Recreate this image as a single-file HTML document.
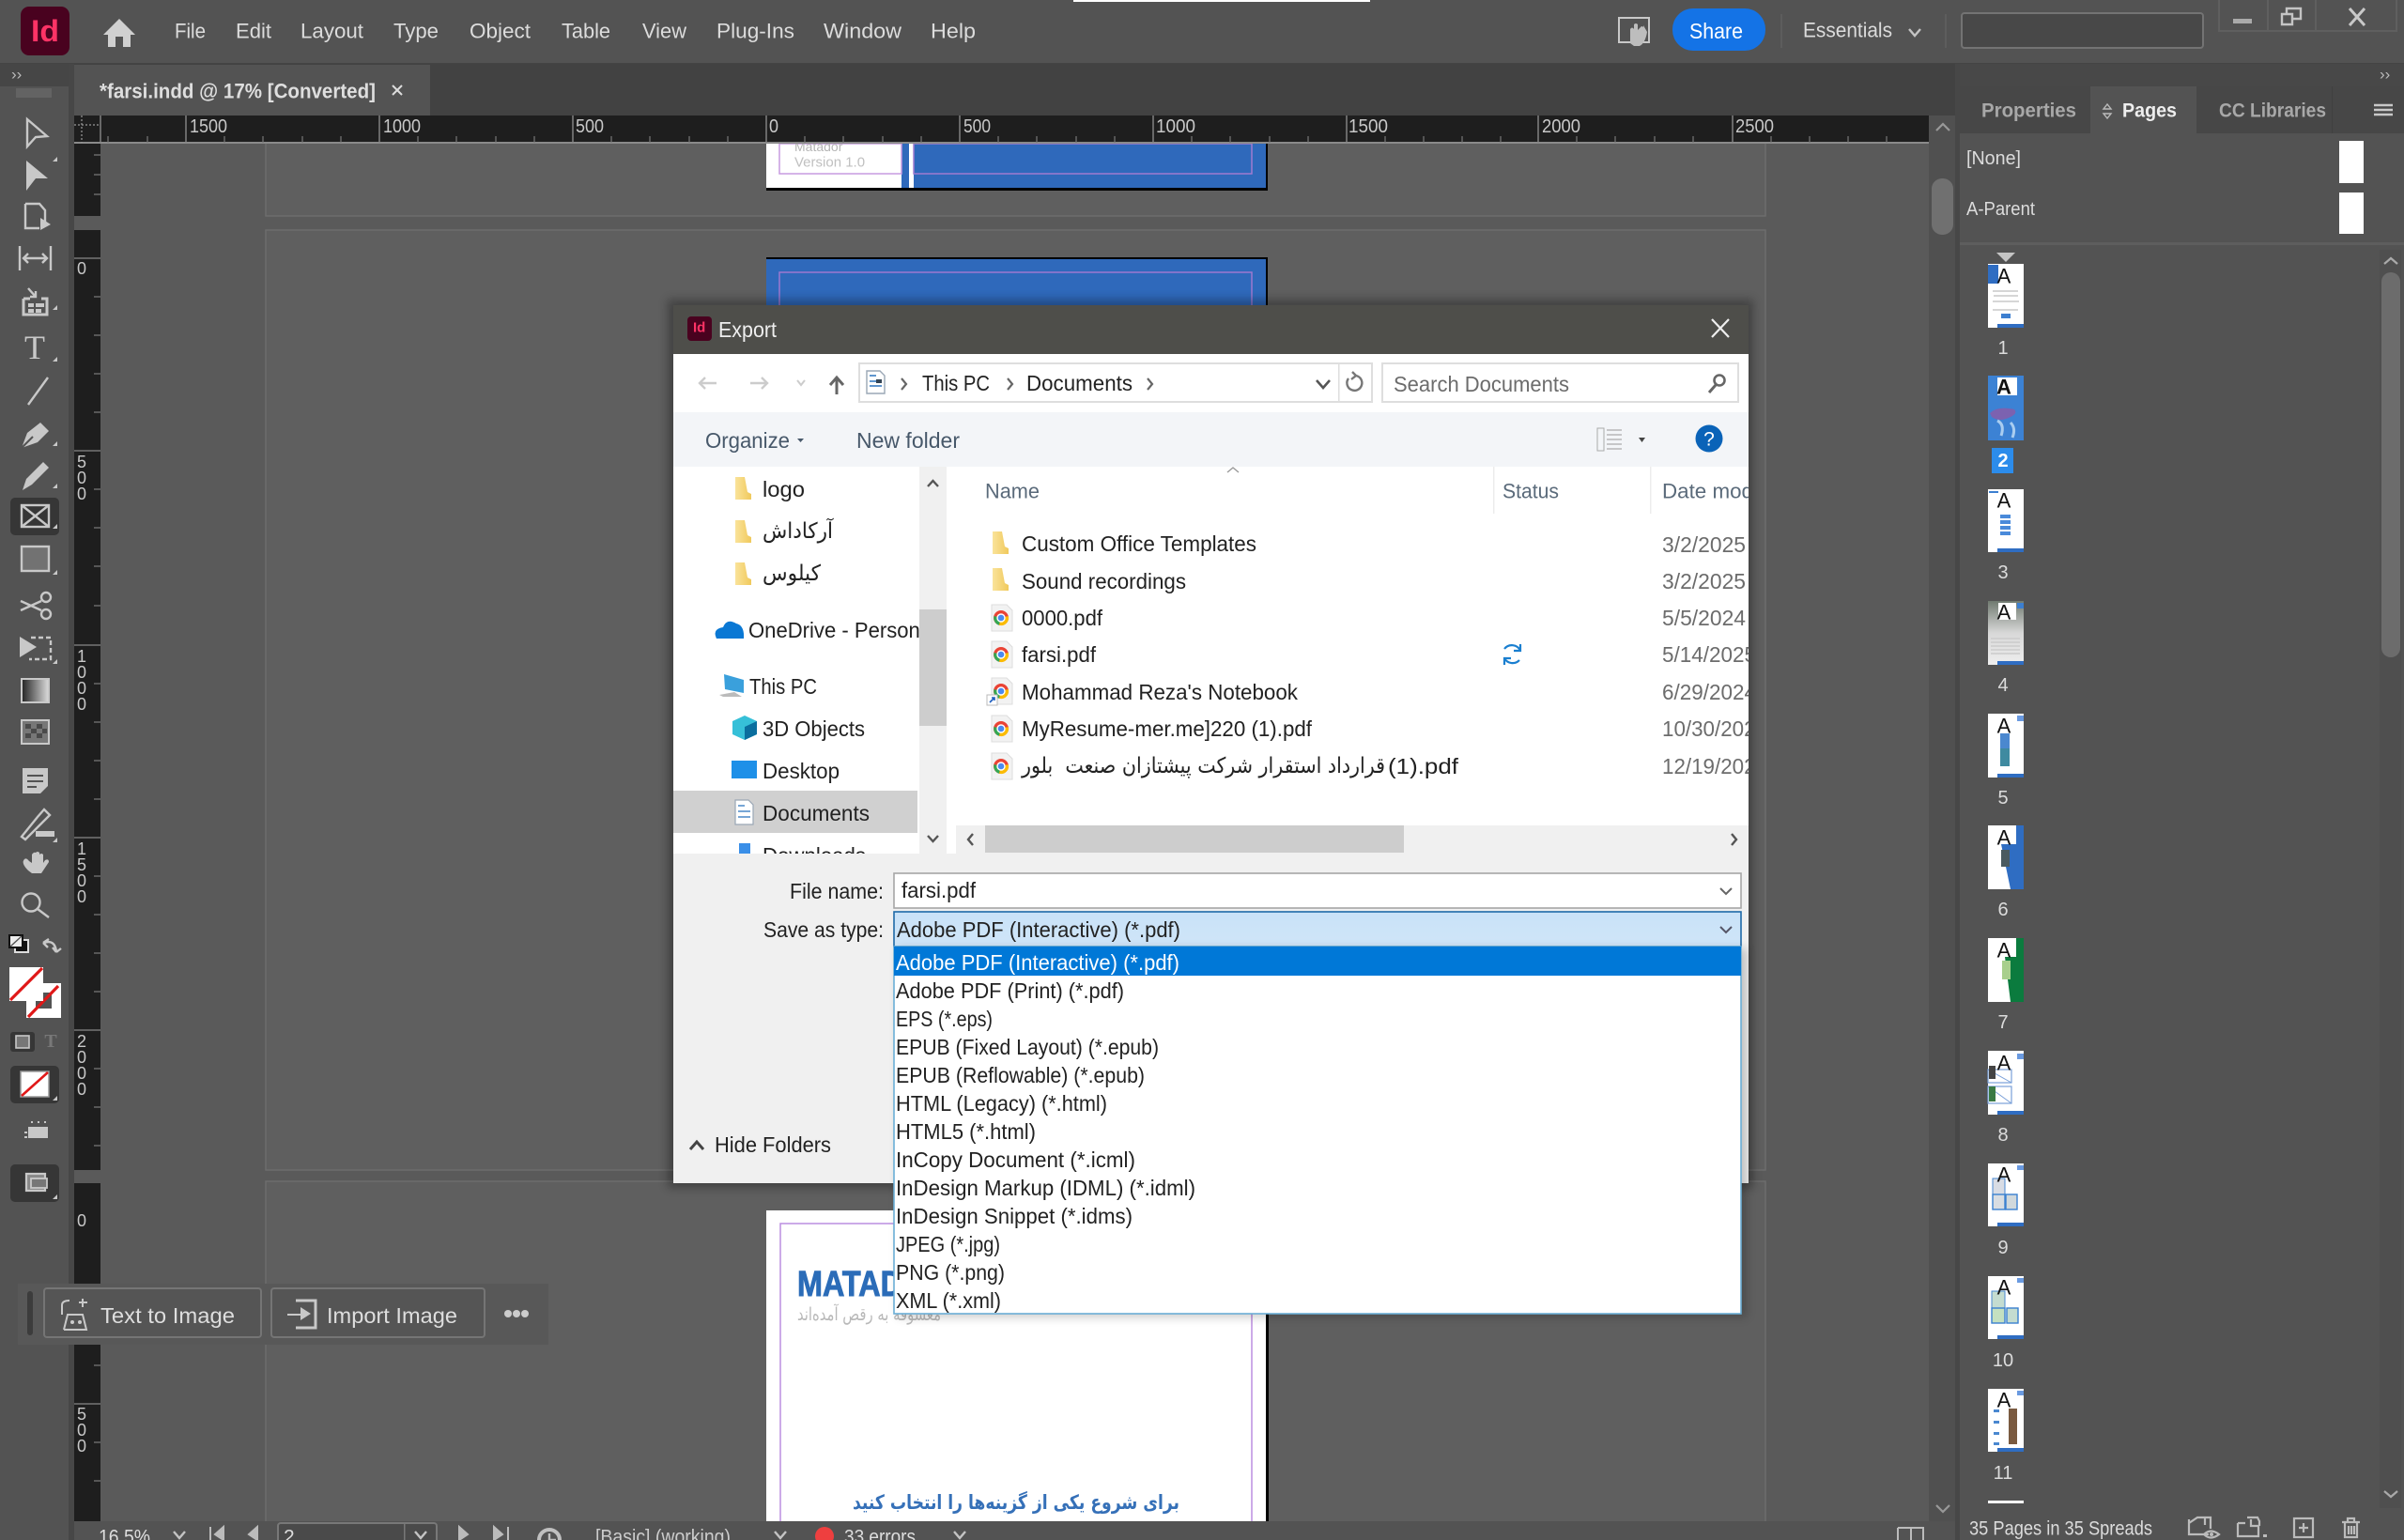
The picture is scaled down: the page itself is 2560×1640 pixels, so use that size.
<!DOCTYPE html>
<html><head><meta charset="utf-8"><title>InDesign Export</title>
<style>
html,body{margin:0;padding:0;background:#535353;width:2560px;height:1640px;overflow:hidden}
svg{display:block}
text{font-family:"Liberation Sans","DejaVu Sans",sans-serif;dominant-baseline:central}
.m{font-size:22px;fill:#dcdcdc}
.d{font-size:23px;fill:#222}
.g{font-size:23px;fill:#6c6c6c}
.h{font-size:22px;fill:#5a6a7a}
.r{font-size:20px;fill:#c8c8c8}
.v{font-size:18px;fill:#c8c8c8;text-anchor:middle}
.n{font-size:20px;fill:#dcdcdc;text-anchor:middle}
.a{font-size:22px;fill:#111;text-anchor:middle}
.ar{font-family:"DejaVu Sans",sans-serif}
.i{fill:none;stroke:#c8c8c8;stroke-width:2.4}
.f{fill:#c8c8c8}
.c{fill:none;stroke:#c4c4c4;stroke-width:2.4}
.k{fill:none;stroke:#555;stroke-width:2.2}
.w{fill:none;stroke:#bbb;stroke-width:2.2}
</style></head><body>
<svg width="2560" height="1640" viewBox="0 0 2560 1640" xmlns="http://www.w3.org/2000/svg">
<defs>
<filter id="sh" x="-10%" y="-10%" width="120%" height="120%"><feGaussianBlur stdDeviation="5"/></filter>
<clipPath id="dlg"><rect x="717" y="320" width="1145" height="940"/></clipPath>
<clipPath id="nav"><rect x="717" y="497" width="262" height="412"/></clipPath>
<linearGradient id="fy" x1="0" x2="1"><stop offset="0" stop-color="#fae39a"/><stop offset="1" stop-color="#f0c95c"/></linearGradient>
<linearGradient id="gr" x1="0" x2="1"><stop offset="0" stop-color="#222"/><stop offset="1" stop-color="#ddd"/></linearGradient>
<linearGradient id="p4" x1="0" x2="0" y1="0" y2="1"><stop offset="0" stop-color="#707a70"/><stop offset=".5" stop-color="#d8d8d8"/><stop offset="1" stop-color="#eee"/></linearGradient>
<linearGradient id="cb" x1="0" x2="0" y1="0" y2="1"><stop offset="0" stop-color="#c9e2f8"/><stop offset="1" stop-color="#cfe5f8"/></linearGradient>
<symbol id="fld" viewBox="0 0 18 24" width="18" height="24"><path d="M1,0H11L14,16L18,18V24H1Z" fill="url(#fy)"/></symbol>
<symbol id="chr" viewBox="0 0 24 30" width="24" height="30"><path d="M1,1H17L23,7V29H1Z" fill="#f2f2f2" stroke="#ddd"/><circle cx="11" cy="15" r="8" fill="#ea4335"/><path d="M11,15L3.5,13A8,8 0 0 0 9,22.8Z" fill="#34a853"/><path d="M11,15L9,22.8A8,8 0 0 0 18.8,13Z" fill="#fbbc05"/><circle cx="11" cy="15" r="4" fill="#4a8af0" stroke="#fff" stroke-width="1.4"/></symbol>
</defs>

<!-- base -->
<rect width="2560" height="1640" fill="#535353"/>
<rect x="1143" y="0" width="316" height="2" fill="#fff"/>

<!-- title bar -->
<rect x="22" y="7" width="52" height="52" rx="9" fill="#49021f"/>
<text x="33" y="33" font-size="32" font-weight="bold" fill="#ff3366" textLength="30" lengthAdjust="spacingAndGlyphs">Id</text>
<path d="M127,20L110,37H115V50H123V39H131V50H139V37H144Z" fill="#d0d0d0"/>
<text class="m" x="186" y="33" textLength="33" lengthAdjust="spacingAndGlyphs">File</text>
<text class="m" x="251" y="33" textLength="38" lengthAdjust="spacingAndGlyphs">Edit</text>
<text class="m" x="320" y="33" textLength="67" lengthAdjust="spacingAndGlyphs">Layout</text>
<text class="m" x="419" y="33" textLength="48" lengthAdjust="spacingAndGlyphs">Type</text>
<text class="m" x="500" y="33" textLength="65" lengthAdjust="spacingAndGlyphs">Object</text>
<text class="m" x="598" y="33" textLength="52" lengthAdjust="spacingAndGlyphs">Table</text>
<text class="m" x="684" y="33" textLength="47" lengthAdjust="spacingAndGlyphs">View</text>
<text class="m" x="763" y="33" textLength="83" lengthAdjust="spacingAndGlyphs">Plug-Ins</text>
<text class="m" x="877" y="33" textLength="83" lengthAdjust="spacingAndGlyphs">Window</text>
<text class="m" x="991" y="33" textLength="48" lengthAdjust="spacingAndGlyphs">Help</text>

<rect x="1724" y="19" width="32" height="26" fill="none" stroke="#c8c8c8" stroke-width="2"/>
<path d="M1736,46V31Q1738,28 1740,31V26Q1742,24 1744,26V32L1748,28Q1751,28 1750,32V27L1754,34Q1752,46 1746,49H1740Z" fill="#bdbdbd"/>
<rect x="1781" y="9" width="99" height="45" rx="22" fill="#1473e6"/>
<text x="1799" y="33" font-size="23" fill="#fff" textLength="57" lengthAdjust="spacingAndGlyphs">Share</text>
<rect x="1896" y="15" width="2" height="36" fill="#5d5d5d"/>
<text class="m" x="1920" y="32" textLength="95" lengthAdjust="spacingAndGlyphs">Essentials</text>
<path d="M2033,31L2039,38L2045,31" class="c"/>
<rect x="2071" y="15" width="2" height="36" fill="#5d5d5d"/>
<rect x="2089" y="14" width="257" height="37" rx="3" fill="#484848" stroke="#737373" stroke-width="2"/>
<path d="M2363,0V33H2552V0" fill="none" stroke="#5f5f5f" stroke-width="2"/>
<path d="M2415,0V33M2466,0V33" stroke="#5f5f5f" stroke-width="2"/>
<rect x="2378" y="20" width="20" height="5" fill="#aaa"/>
<path d="M2430,15H2441V26H2430ZM2435,15V9H2450V20H2441" class="c" stroke-width="3"/>
<path d="M2502,9L2518,27M2518,9L2502,27" fill="none" stroke="#c8c8c8" stroke-width="3"/>

<!-- app chrome panels -->
<rect x="0" y="67" width="2560" height="1" fill="#444"/>
<rect x="79" y="68" width="2003" height="55" fill="#424242"/>
<rect x="79" y="69" width="379" height="54" fill="#535353"/>
<text x="106" y="97" font-size="22" font-weight="bold" fill="#dedede" textLength="294" lengthAdjust="spacingAndGlyphs">*farsi.indd @ 17% [Converted]</text>
<path d="M418,91L428,101M428,91L418,101" fill="none" stroke="#ddd" stroke-width="2"/>

<!-- pasteboard -->
<rect x="79" y="152" width="2003" height="1470" fill="#5a5a5a"/>
<rect x="283" y="152" width="1597" height="78" fill="#5f5f5f" stroke="#6d6d6d" stroke-width="1.5"/>
<rect x="283" y="245" width="1597" height="1001" fill="#5f5f5f" stroke="#6d6d6d" stroke-width="1.5"/>
<rect x="283" y="1258" width="1597" height="380" fill="#5f5f5f" stroke="#6d6d6d" stroke-width="1.5"/>

<!-- page 1 remainder -->
<rect x="816" y="153" width="534" height="50" fill="#000"/>
<rect x="816" y="153" width="532" height="47" fill="#fff"/>
<rect x="960" y="153" width="388" height="47" fill="#2f69bb"/>
<rect x="968" y="153" width="5" height="47" fill="#fff"/>
<rect x="830" y="153" width="130" height="32" fill="none" stroke="#c79be0" stroke-width="1.5"/>
<rect x="973" y="153" width="360" height="32" fill="none" stroke="#a07bd0" stroke-width="1.5"/>
<text x="846" y="156" font-size="14" fill="#b5b5b5">Matador</text>
<text x="846" y="173" font-size="15" fill="#c0c0c0">Version 1.0</text>

<!-- page 2 -->
<rect x="816" y="274" width="534" height="60" fill="#000"/>
<rect x="816" y="276" width="532" height="60" fill="#2f69bb"/>
<rect x="830" y="290" width="503" height="50" fill="none" stroke="#9d78cf" stroke-width="1.5"/>

<!-- page 3 -->
<rect x="1348" y="1289" width="3" height="331" fill="#000"/>
<rect x="816" y="1289" width="532" height="331" fill="#fff"/>
<path d="M831,1620V1303H1333V1620" fill="none" stroke="#bb8ee0" stroke-width="1.5"/>
<text x="849" y="1368" font-size="38" font-weight="bold" fill="#2b6cb8" stroke="#2b6cb8" stroke-width="1" textLength="112" lengthAdjust="spacingAndGlyphs">MATAD</text>
<text class="ar" x="849" y="1400" font-size="19" fill="#b9b9b9" textLength="153" lengthAdjust="spacingAndGlyphs">معشوقه به رقص آمده‌اند</text>
<text class="ar" x="908" y="1600" font-size="21" font-weight="bold" fill="#3570b8" textLength="348" lengthAdjust="spacingAndGlyphs">برای شروع یکی از گزینه‌ها را انتخاب کنید</text>

<!-- horizontal ruler -->
<rect x="79" y="123" width="1975" height="29" fill="#1e1e1e"/>
<rect x="79" y="151" width="1975" height="2" fill="#8a8a8a"/>
<path d="M107,123V152M198,123V152M404,123V152M610,123V152M816,123V152M1022,123V152M1228,123V152M1434,123V152M1638,123V152M1845,123V152" stroke="#888" stroke-width="1.4"/>
<path d="M115,145V152M157,145V152M239,145V152M280,145V152M322,145V152M363,145V152M445,145V152M486,145V152M528,145V152M569,145V152M651,145V152M692,145V152M734,145V152M775,145V152M857,145V152M898,145V152M940,145V152M981,145V152M1063,145V152M1104,145V152M1146,145V152M1187,145V152M1269,145V152M1310,145V152M1352,145V152M1393,145V152M1475,145V152M1516,145V152M1557,145V152M1598,145V152M1679,145V152M1720,145V152M1762,145V152M1803,145V152M1886,145V152M1927,145V152M1968,145V152M2009,145V152" stroke="#777" stroke-width="1.2"/>
<path d="M79,133H107M87,123V152" stroke="#999" stroke-width="1.2" stroke-dasharray="2 2"/>
<text class="r" x="202" y="135" textLength="40" lengthAdjust="spacingAndGlyphs">1500</text>
<text class="r" x="408" y="135" textLength="40" lengthAdjust="spacingAndGlyphs">1000</text>
<text class="r" x="613" y="135" textLength="30" lengthAdjust="spacingAndGlyphs">500</text>
<text class="r" x="819" y="135" textLength="10" lengthAdjust="spacingAndGlyphs">0</text>
<text class="r" x="1026" y="135" textLength="29" lengthAdjust="spacingAndGlyphs">500</text>
<text class="r" x="1231" y="135" textLength="42" lengthAdjust="spacingAndGlyphs">1000</text>
<text class="r" x="1436" y="135" textLength="42" lengthAdjust="spacingAndGlyphs">1500</text>
<text class="r" x="1642" y="135" textLength="41" lengthAdjust="spacingAndGlyphs">2000</text>
<text class="r" x="1848" y="135" textLength="41" lengthAdjust="spacingAndGlyphs">2500</text>

<!-- vertical ruler -->
<rect x="79" y="153" width="28" height="77" fill="#1e1e1e"/>
<rect x="79" y="245" width="28" height="1001" fill="#1e1e1e"/>
<rect x="79" y="1260" width="28" height="360" fill="#1e1e1e"/>
<path d="M79,275H107M79,480H107M79,687H107M79,892H107M79,1097H107M79,1495H107" stroke="#888" stroke-width="1.3"/>
<path d="M100,165H107M100,186H107M100,207H107M100,316H107M100,357H107M100,398H107M100,439H107M100,521H107M100,562H107M100,603H107M100,645H107M100,728H107M100,769H107M100,810H107M100,851H107M100,933H107M100,974H107M100,1015H107M100,1056H107M100,1138H107M100,1179H107M100,1220H107M100,1454H107M100,1536H107M100,1577H107" stroke="#777" stroke-width="1.2"/>
<text class="v" x="87" y="286">0</text>
<text class="v" x="87" y="492">5</text><text class="v" x="87" y="509">0</text><text class="v" x="87" y="526">0</text>
<text class="v" x="87" y="699">1</text><text class="v" x="87" y="716">0</text><text class="v" x="87" y="733">0</text><text class="v" x="87" y="750">0</text>
<text class="v" x="87" y="904">1</text><text class="v" x="87" y="921">5</text><text class="v" x="87" y="938">0</text><text class="v" x="87" y="955">0</text>
<text class="v" x="87" y="1109">2</text><text class="v" x="87" y="1126">0</text><text class="v" x="87" y="1143">0</text><text class="v" x="87" y="1160">0</text>
<text class="v" x="87" y="1300">0</text>
<text class="v" x="87" y="1506">5</text><text class="v" x="87" y="1523">0</text><text class="v" x="87" y="1540">0</text>

<!-- left toolbar -->
<rect x="0" y="68" width="79" height="1572" fill="#535353"/>
<rect x="73" y="68" width="6" height="1572" fill="#474747"/>
<rect x="0" y="68" width="73" height="24" fill="#464646"/>
<text x="12" y="79" font-size="17" fill="#bbb">››</text>
<path d="M18,94V104M20,94V104M22,94V104M24,94V104M26,94V104M28,94V104M30,94V104M32,94V104M34,94V104M36,94V104M38,94V104M40,94V104M42,94V104M44,94V104M46,94V104M48,94V104M50,94V104M52,94V104M54,94V104" stroke="#777" stroke-width=".9"/>
<path d="M29,127L50,145L38,146L29,156Z" class="i"/>
<path d="M28,171L51,190L38,190L28,203Z" class="f"/>
<path d="M27,217H42L48,224V237M27,217V243H42" class="i"/><path d="M43,232L54,239L43,245Z" class="f"/>
<path d="M21,262V288M54,262V288" class="i" stroke-width="3"/><path d="M25,275H50M30,270L25,275L30,280M45,270L50,275L45,280" class="i"/>
<path d="M25,318V335H50V318H44M25,318H32" fill="none" stroke="#c8c8c8" stroke-width="3"/><path d="M30,307L38,316M38,310V316H32" class="i"/><path d="M30,323h6v4h-6zM38,323h6v4h-6zM30,329h6v4h-6zM38,329h6v4h-6zM44,323h3v4h-3z" class="f"/>
<text x="37" y="370" font-size="36" fill="#c8c8c8" text-anchor="middle" style="font-family:'Liberation Serif',serif">T</text>
<path d="M30,431L51,402" class="i" stroke-width="2.6"/>
<path d="M23,477L29,461L43,450L52,459L40,471Z" class="f"/><path d="M23,477L35,465" stroke="#535353" stroke-width="2"/>
<path d="M24,522L28,510L46,492L52,498L34,516Z" class="f"/>
<rect x="11" y="530" width="52" height="40" rx="5" fill="#363636"/>
<rect x="23" y="538" width="29" height="23" class="i"/><path d="M23,538L52,561M52,538L23,561" class="i" stroke-width="2"/>
<rect x="23" y="582" width="29" height="26" fill="#727272" stroke="#c8c8c8" stroke-width="2.4"/>
<circle cx="49" cy="636" r="5" class="i"/><circle cx="49" cy="654" r="5" class="i"/><path d="M22,640L44,650M22,650L44,640" class="i"/>
<path d="M21,678L39,689L21,700Z" class="f"/><path d="M33,679H54V702H31" class="i" stroke-dasharray="5 3"/>
<rect x="23" y="723" width="29" height="25" fill="url(#gr)" stroke="#c8c8c8" stroke-width="2"/>
<rect x="23" y="767" width="29" height="25" fill="#777" stroke="#c8c8c8" stroke-width="2"/>
<path d="M27,771h6v5h-6zM39,771h6v5h-6zM33,776h6v5h-6zM45,776h5v5h-5zM27,781h6v5h-6zM39,781h6v5h-6z" fill="#4a4a4a"/>
<path d="M24,818H51V837L43,845H24Z" class="f"/><path d="M29,826H46M29,832H46M29,838H39" stroke="#535353" stroke-width="2"/>
<path d="M23,891L40,870L47,862L53,868L44,877L27,894Z" class="i"/><path d="M38,885H58V891H38Z" class="f"/>
<path d="M26,915Q22,919 30,927L34,930H44L52,918Q52,914 48,916L46,919V910Q44,908 42,910V918V908Q40,906 38,908V918V908Q36,907 34,910V919L31,917Q28,913 26,915Z" class="f"/>
<circle cx="33" cy="961" r="9.5" class="i"/><path d="M40,968L52,977" class="i" stroke-width="3"/>
<rect x="16" y="1001" width="14" height="13" fill="#111" stroke="#ddd" stroke-width="2"/>
<rect x="10" y="996" width="14" height="13" fill="#eee" stroke="#111" stroke-width="2"/><path d="M11,1008L23,997" stroke="#555" stroke-width="1.4"/>
<path d="M47,1004Q58,1000 60,1013M46,1004L52,1000M46,1004L51,1009M60,1014L56,1009M60,1014L65,1010" class="i"/>
<rect x="28" y="1047" width="37" height="37" fill="#fff"/><rect x="38" y="1057" width="17" height="17" fill="#535353"/><path d="M30,1083L62,1050" stroke="#e01818" stroke-width="3.2"/>
<rect x="10" y="1030" width="36" height="36" fill="#fff"/><path d="M11,1065L45,1031" stroke="#e01818" stroke-width="3.2"/>
<rect x="11" y="1099" width="26" height="21" rx="3" fill="#363636"/><rect x="17" y="1103" width="14" height="13" fill="#777" stroke="#c8c8c8" stroke-width="1.6"/>
<text x="54" y="1109" font-size="20" font-weight="bold" fill="#787878" text-anchor="middle" style="font-family:'Liberation Serif',serif">T</text>
<rect x="11" y="1135" width="52" height="40" rx="5" fill="#363636"/>
<rect x="22" y="1141" width="30" height="27" fill="#fff" stroke="#999" stroke-width="1.5"/><path d="M23,1167L51,1142" stroke="#e01818" stroke-width="2.6"/>
<path d="M30,1200H51V1212H30Z" class="f"/><path d="M26,1206H29M26,1211H29M33,1195h2M40,1195h2M47,1195h2" stroke="#c8c8c8" stroke-width="2"/>
<rect x="11" y="1240" width="52" height="40" rx="5" fill="#363636"/>
<rect x="28" y="1250" width="20" height="18" fill="#888" stroke="#c8c8c8" stroke-width="2.2"/><rect x="33" y="1255" width="17" height="10" fill="#777" stroke="#c8c8c8" stroke-width="1.8"/>
<path d="M56,172h5v-5zM56,330h5v-5zM56,385h5v-5zM56,475h5v-5zM56,520h5v-5zM56,563h5v-5zM56,612h5v-5zM56,707h5v-5zM56,897h5v-5zM56,1172h5v-5zM56,1277h5v-5z" fill="#c8c8c8"/>

<!-- floating bar -->
<rect x="19" y="1367" width="565" height="65" fill="#585858"/>
<rect x="29" y="1375" width="6" height="47" rx="3" fill="#3c3c3c"/>
<rect x="47" y="1372" width="231" height="52" rx="3" fill="#555" stroke="#757575" stroke-width="2"/>
<rect x="289" y="1372" width="227" height="52" rx="3" fill="#555" stroke="#757575" stroke-width="2"/>
<path d="M66,1400V1390Q66,1385 74,1385M68,1416L72,1400H88L92,1416H68M88,1383V1392M84,1387H93" fill="none" stroke="#c8c8c8" stroke-width="2"/>
<circle cx="77" cy="1408" r="2" fill="#ccc"/><circle cx="85" cy="1408" r="2" fill="#ccc"/>
<text x="107" y="1401" font-size="23" fill="#dedede" textLength="143" lengthAdjust="spacingAndGlyphs">Text to Image</text>
<path d="M315,1385H336V1414H315" fill="none" stroke="#c8c8c8" stroke-width="3"/><path d="M306,1399H320V1392L331,1399L320,1406V1401H306Z" fill="#c8c8c8"/>
<text x="348" y="1401" font-size="23" fill="#dedede" textLength="139" lengthAdjust="spacingAndGlyphs">Import Image</text>
<circle cx="541" cy="1399" r="4" fill="#ccc"/><circle cx="550" cy="1399" r="4" fill="#ccc"/><circle cx="559" cy="1399" r="4" fill="#ccc"/>

<!-- doc scrollbar -->
<rect x="2054" y="123" width="28" height="1497" fill="#505050"/>
<rect x="2057" y="190" width="23" height="60" rx="11" fill="#707070"/>
<path d="M2062,139L2069,132L2076,139" fill="none" stroke="#999" stroke-width="2.2"/>
<path d="M2062,1603L2069,1610L2076,1603" fill="none" stroke="#999" stroke-width="2.2"/>

<!-- status bar -->
<rect x="79" y="1620" width="2003" height="20" fill="#535353"/>
<text x="105" y="1637" font-size="21" fill="#ddd" textLength="55" lengthAdjust="spacingAndGlyphs">16.5%</text>
<path d="M185,1631L191,1638L197,1631" class="c"/>
<path d="M224,1626V1640M238,1626L229,1634L238,1640ZM274,1626L265,1634L274,1640Z" fill="#bbb" stroke="#bbb" stroke-width="2"/>
<rect x="296" y="1622" width="169" height="24" rx="3" fill="#4a4a4a" stroke="#787878" stroke-width="2"/>
<rect x="430" y="1622" width="1.5" height="20" fill="#787878"/>
<text x="302" y="1637" font-size="21" fill="#ddd">2</text>
<path d="M442,1631L448,1638L454,1631" class="c"/>
<path d="M489,1626L498,1634L489,1640ZM526,1626L535,1634L526,1640ZM541,1626V1640" fill="#bbb" stroke="#bbb" stroke-width="2"/>
<circle cx="585" cy="1640" r="11" fill="none" stroke="#c0c0c0" stroke-width="4"/>
<path d="M585,1633V1640H592" stroke="#c0c0c0" stroke-width="2.4" fill="none"/>
<text x="634" y="1637" font-size="21" fill="#ccc" textLength="144" lengthAdjust="spacingAndGlyphs">[Basic] (working)</text>
<path d="M825,1631L831,1638L837,1631" class="c"/>
<circle cx="878" cy="1636" r="10" fill="#ee3f3f"/>
<text x="899" y="1637" font-size="21" fill="#ddd" textLength="76" lengthAdjust="spacingAndGlyphs">33 errors</text>
<path d="M1016,1631L1022,1638L1028,1631" class="c"/>
<path d="M2021,1627H2048V1640M2021,1627V1640M2035,1627V1640" fill="none" stroke="#bbb" stroke-width="2"/>

<!-- right panel -->
<rect x="2082" y="68" width="5" height="1572" fill="#474747"/>
<rect x="2087" y="68" width="473" height="24" fill="#484848"/>
<text x="2534" y="79" font-size="17" fill="#bbb">››</text>
<rect x="2087" y="92" width="473" height="50" fill="#474747"/>
<rect x="2226" y="92" width="113" height="50" fill="#535353"/>
<rect x="2483" y="92" width="1" height="50" fill="#404040"/>
<text x="2110" y="118" font-size="21" font-weight="bold" fill="#a8a8a8" textLength="101" lengthAdjust="spacingAndGlyphs">Properties</text>
<path d="M2244,111L2240,116H2248ZM2244,126L2240,121H2248Z" fill="none" stroke="#bbb" stroke-width="1.4"/>
<text x="2260" y="118" font-size="21" font-weight="bold" fill="#eee" textLength="58" lengthAdjust="spacingAndGlyphs">Pages</text>
<text x="2363" y="118" font-size="21" font-weight="bold" fill="#a8a8a8" textLength="114" lengthAdjust="spacingAndGlyphs">CC Libraries</text>
<path d="M2528,112H2548M2528,117H2548M2528,122H2548" stroke="#c8c8c8" stroke-width="2.4"/>
<text x="2094" y="169" font-size="20" fill="#dcdcdc" textLength="58" lengthAdjust="spacingAndGlyphs">[None]</text>
<text x="2094" y="223" font-size="20" fill="#dcdcdc" textLength="73" lengthAdjust="spacingAndGlyphs">A-Parent</text>
<rect x="2491" y="150" width="26" height="45" fill="#fff"/>
<rect x="2491" y="205" width="26" height="44" fill="#fff"/>
<rect x="2087" y="258" width="473" height="3" fill="#5e5e5e"/>
<rect x="2534" y="266" width="23" height="1340" fill="#4f4f4f"/>
<rect x="2536" y="290" width="20" height="410" rx="10" fill="#6c6c6c"/>
<path d="M2539,281L2546,275L2553,281" fill="none" stroke="#aaa" stroke-width="2.2"/>
<path d="M2539,1588L2546,1594L2553,1588" fill="none" stroke="#aaa" stroke-width="2.2"/>
<path d="M2126,269H2146L2136,279Z" fill="#c4c4c4"/>

<!-- thumbnails -->
<g transform="translate(2117,281)"><rect width="38" height="68" fill="#fff"/><rect width="11" height="20" y="1" fill="#2f6dc2"/><path d="M5,29H32M6,34H32M5,40H33M5,49H32" stroke="#c8c8c8" stroke-width="1.6"/><rect x="14" y="53" width="10" height="5" fill="#3d7fd0"/><rect x="10" y="64" width="28" height="4" fill="#2f6dc2"/><text class="a" x="17" y="13">A</text></g>
<g transform="translate(2117,400)"><rect width="38" height="69" fill="#3c82d4"/><path d="M2,40Q10,32 28,36Q32,40 24,44Q12,50 4,44Z" fill="#7c62b0"/><path d="M10,48Q18,52 14,64M24,50Q30,56 26,66" stroke="#a9cdf0" stroke-width="3" fill="none"/><rect x="10" y="2" width="21" height="19" fill="#fff"/><text class="a" x="17" y="12" font-weight="bold">A</text></g>
<g transform="translate(2117,521)"><rect width="38" height="67" fill="#fff"/><rect x="1" y="2" width="10" height="2" fill="#3c7fd0"/><rect x="13" y="27" width="11" height="4" fill="#4a8ada"/><rect x="13" y="33" width="11" height="4" fill="#4a8ada"/><rect x="13" y="39" width="11" height="4" fill="#4a8ada"/><rect x="13" y="45" width="11" height="4" fill="#4a8ada"/><rect x="10" y="63" width="28" height="4" fill="#2f6dc2"/><text class="a" x="17" y="12">A</text></g>
<g transform="translate(2117,640)"><rect width="38" height="68" fill="url(#p4)"/><rect x="31" y="2" width="7" height="6" fill="#3c7fd0"/><rect x="11" y="2" width="19" height="18" fill="#fff"/><path d="M3,40H34M3,44H34M3,48H34M3,52H34M3,56H34" stroke="#ccc" stroke-width="1.4"/><rect x="10" y="64" width="28" height="4" fill="#2f6dc2"/><text class="a" x="17" y="12">A</text></g>
<g transform="translate(2117,760)"><rect width="38" height="68" fill="#fff"/><rect x="31" y="2" width="7" height="6" fill="#6a9ae0"/><rect x="13" y="21" width="10" height="16" fill="#4b88cf"/><rect x="13" y="37" width="10" height="19" fill="#3f8aa0"/><rect x="10" y="64" width="28" height="4" fill="#2f6dc2"/><text class="a" x="17" y="13">A</text></g>
<g transform="translate(2117,879)"><rect width="38" height="68" fill="#fff"/><path d="M14,20H38V68H24Z" fill="#2f6dc2"/><rect x="30" y="0" width="8" height="20" fill="#2f6dc2"/><rect x="14" y="26" width="9" height="18" fill="#4a5a60"/><text class="a" x="17" y="13">A</text></g>
<g transform="translate(2117,999)"><rect width="38" height="68" fill="#fff"/><path d="M18,20H38V68H24Z" fill="#0b7b3e"/><rect x="30" y="0" width="8" height="20" fill="#0b7b3e"/><rect x="15" y="24" width="9" height="20" fill="#a8cf8c"/><text class="a" x="17" y="13">A</text></g>
<g transform="translate(2117,1119)"><rect width="38" height="68" fill="#fff"/><rect x="31" y="3" width="7" height="6" fill="#6a9ae0"/><rect x="0" y="20" width="25" height="14" fill="none" stroke="#7aa0d8" stroke-width="1.2"/><rect x="0" y="38" width="25" height="18" fill="none" stroke="#7aa0d8" stroke-width="1.2"/><path d="M0,20L25,34M0,38L25,56" stroke="#7aa0d8"/><rect x="1" y="16" width="7" height="14" fill="#444"/><rect x="1" y="38" width="7" height="16" fill="#3a7a44"/><rect x="10" y="64" width="28" height="4" fill="#2f6dc2"/><text class="a" x="17" y="13">A</text></g>
<g transform="translate(2117,1239)"><rect width="38" height="67" fill="#fff"/><rect x="31" y="2" width="7" height="5" fill="#6a9ae0"/><rect x="5" y="16" width="13" height="17" fill="#d8dce4" stroke="#4a88d0"/><rect x="5" y="33" width="13" height="16" fill="#d8dde2" stroke="#3a80d0" stroke-width="1.4"/><rect x="19" y="33" width="12" height="16" fill="#d0d8dc" stroke="#3a80d0" stroke-width="1.4"/><rect x="10" y="63" width="28" height="4" fill="#2f6dc2"/><text class="a" x="17" y="12">A</text></g>
<g transform="translate(2117,1359)"><rect width="38" height="67" fill="#fff"/><rect x="31" y="2" width="7" height="5" fill="#6a9ae0"/><rect x="4" y="16" width="14" height="18" fill="#c4dcd0" stroke="#4a88d0"/><rect x="4" y="34" width="14" height="16" fill="#c4e0c0" stroke="#3a80d0" stroke-width="1.4"/><rect x="20" y="34" width="12" height="16" fill="#c4dcd0" stroke="#3a80d0" stroke-width="1.4"/><rect x="10" y="63" width="28" height="4" fill="#2f6dc2"/><text class="a" x="17" y="12">A</text></g>
<g transform="translate(2117,1479)"><rect width="38" height="67" fill="#fff"/><rect x="31" y="2" width="7" height="5" fill="#6a9ae0"/><rect x="22" y="21" width="9" height="38" fill="#7a5a40"/><rect x="6" y="22" width="6" height="3" fill="#4a88d0"/><rect x="6" y="34" width="6" height="3" fill="#4a88d0"/><rect x="6" y="46" width="6" height="3" fill="#4a88d0"/><rect x="6" y="57" width="6" height="3" fill="#4a88d0"/><rect x="10" y="63" width="28" height="4" fill="#2f6dc2"/><text class="a" x="17" y="12">A</text></g>
<rect x="2117" y="1598" width="38" height="3" fill="#fff"/>
<text class="n" x="2133" y="371">1</text>
<rect x="2121" y="477" width="23" height="27" fill="#2c8ceb"/>
<text class="n" x="2133" y="491" font-weight="bold" style="fill:#fff">2</text>
<text class="n" x="2133" y="610">3</text>
<text class="n" x="2133" y="730">4</text>
<text class="n" x="2133" y="850">5</text>
<text class="n" x="2133" y="969">6</text>
<text class="n" x="2133" y="1089">7</text>
<text class="n" x="2133" y="1209">8</text>
<text class="n" x="2133" y="1329">9</text>
<text class="n" x="2133" y="1449">10</text>
<text class="n" x="2133" y="1569">11</text>
<text x="2097" y="1628" font-size="21" fill="#dcdcdc" textLength="195" lengthAdjust="spacingAndGlyphs">35 Pages in 35 Spreads</text>
<path d="M2331,1618V1634H2352M2331,1622L2340,1616H2354V1628M2348,1616V1624" class="w"/>
<path d="M2347,1634Q2354,1627 2363,1634Q2354,1641 2347,1634Z" class="w"/><circle cx="2355" cy="1634" r="2" fill="#bbb"/>
<path d="M2383,1622V1636H2405V1625H2397V1618M2391,1622L2383,1622M2393,1616H2404L2406,1620V1625" class="w"/>
<rect x="2410" y="1634" width="4" height="3" fill="#bbb"/>
<rect x="2443" y="1617" width="20" height="20" class="w"/><path d="M2448,1627H2458M2453,1622V1632" class="w"/>
<path d="M2494,1621H2513M2497,1621V1637H2510V1621M2500,1621V1617H2507V1621M2501,1625V1634M2504,1625V1634M2507,1625V1634" class="w"/>

<!-- dialog shadow -->
<rect x="711" y="319" width="1156" height="946" fill="#000" opacity=".3" filter="url(#sh)"/>

<!-- dialog -->
<g clip-path="url(#dlg)">
<rect x="717" y="325" width="1145" height="52" fill="#4e4e4a"/>
<rect x="732" y="337" width="26" height="26" rx="4" fill="#49021f"/>
<text x="738" y="349" font-size="15" font-weight="bold" fill="#ff3366">Id</text>
<text x="765" y="351" font-size="23" fill="#eee" textLength="62" lengthAdjust="spacingAndGlyphs">Export</text>
<path d="M1823,340L1841,359M1841,340L1823,359" fill="none" stroke="#eee" stroke-width="2.2"/>

<rect x="717" y="377" width="1145" height="883" fill="#fff"/>
<path d="M745,408H763M751,402L745,408L751,414" fill="none" stroke="#ccc" stroke-width="2.4"/>
<path d="M799,408H817M811,402L817,408L811,414" fill="none" stroke="#ccc" stroke-width="2.4"/>
<path d="M849,405L853,410L857,405" fill="none" stroke="#ccc" stroke-width="2"/>
<path d="M891,420V403M884,410L891,402L898,410" fill="none" stroke="#666" stroke-width="3"/>
<rect x="915" y="387" width="546" height="41" fill="#fff" stroke="#dedede" stroke-width="2"/>
<path d="M923,395H937L942,400V419H923Z" fill="#fff" stroke="#9aa7b5" stroke-width="1.4"/><path d="M926,400H933M926,406H939M926,411H939" stroke="#4a88c8" stroke-width="1.8"/><rect x="933" y="404" width="6" height="4" fill="#345"/>
<path d="M960,403L965,409L960,415" fill="none" stroke="#666" stroke-width="2.2"/>
<text class="d" x="982" y="408" textLength="72" lengthAdjust="spacingAndGlyphs">This PC</text>
<path d="M1073,403L1078,409L1073,415" fill="none" stroke="#666" stroke-width="2.2"/>
<text class="d" x="1093" y="408" textLength="113" lengthAdjust="spacingAndGlyphs">Documents</text>
<path d="M1222,403L1227,409L1222,415" fill="none" stroke="#666" stroke-width="2.2"/>
<path d="M1402,405L1409,413L1416,405" fill="none" stroke="#555" stroke-width="2.6"/>
<rect x="1425" y="387" width="1.5" height="41" fill="#dedede"/>
<path d="M1436,403A8,8 0 1 0 1444,400M1440,396L1444,400L1439,404" fill="none" stroke="#777" stroke-width="2.4"/>
<rect x="1472" y="387" width="379" height="41" fill="#fff" stroke="#dedede" stroke-width="2"/>
<text class="g" x="1484" y="409" textLength="187" lengthAdjust="spacingAndGlyphs">Search Documents</text>
<circle cx="1831" cy="405" r="5.5" fill="none" stroke="#666" stroke-width="2.6"/><path d="M1827,410L1820,418" stroke="#666" stroke-width="3"/>

<rect x="717" y="439" width="1145" height="58" fill="#f3f5f8"/>
<text x="751" y="469" font-size="23" fill="#47586a" textLength="90" lengthAdjust="spacingAndGlyphs">Organize</text>
<path d="M849,467H856L852.5,471Z" fill="#47586a"/>
<text x="912" y="469" font-size="23" fill="#47586a" textLength="110" lengthAdjust="spacingAndGlyphs">New folder</text>
<rect x="1701" y="456" width="7" height="24" fill="none" stroke="#aaa" stroke-width="1"/>
<path d="M1711,458H1727M1711,463H1727M1711,468H1727M1711,473H1727M1711,478H1727" stroke="#aaa" stroke-width="1.2"/>
<path d="M1745,466H1752L1748.5,471Z" fill="#444"/>
<circle cx="1820" cy="467" r="14.5" fill="#0a63b8"/>
<text x="1820" y="468" font-size="21" fill="#fff" text-anchor="middle">?</text>

<!-- nav pane -->
<g clip-path="url(#nav)">
<rect x="717" y="842" width="260" height="45" fill="#d0d0d0"/>
<use href="#fld" x="782" y="508"/><use href="#fld" x="782" y="554"/><use href="#fld" x="782" y="599"/>
<text class="d" x="812" y="521" textLength="45" lengthAdjust="spacingAndGlyphs">logo</text>
<text class="d ar" x="812" y="566" font-size="21" textLength="75" lengthAdjust="spacingAndGlyphs">آرکاداش</text>
<text class="d ar" x="812" y="611" font-size="21" textLength="62" lengthAdjust="spacingAndGlyphs">کیلوس</text>
<path d="M763,680Q758,670 770,668Q774,658 784,664Q793,666 792,680Z" fill="#0a78d4"/>
<text class="d" x="797" y="671" textLength="200" lengthAdjust="spacingAndGlyphs">OneDrive - Personal</text>
<path d="M771,718L792,724V738L772,734Z" fill="#3aa0dc"/>
<path d="M766,740L782,737L790,742H770Z" fill="#bbb"/>
<text class="d" x="798" y="731" textLength="72" lengthAdjust="spacingAndGlyphs">This PC</text>
<path d="M793,762L806,768V782L793,788L780,782V768Z" fill="#36c0d8"/><path d="M793,774V788L806,782V768Z" fill="#0a6e9e"/>
<text class="d" x="812" y="776" textLength="109" lengthAdjust="spacingAndGlyphs">3D Objects</text>
<rect x="779" y="810" width="27" height="19" fill="#1e90e8"/>
<text class="d" x="812" y="821" textLength="82" lengthAdjust="spacingAndGlyphs">Desktop</text>
<path d="M783,852H797L802,857V878H783Z" fill="#fff" stroke="#9aa7b5" stroke-width="1.2"/><path d="M786,858H793M786,864H799M786,870H799" stroke="#4a88c8" stroke-width="1.6"/>
<text class="d" x="812" y="866" textLength="114" lengthAdjust="spacingAndGlyphs">Documents</text>
<rect x="787" y="898" width="12" height="14" fill="#3a8fe8"/>
<text class="d" x="812" y="911" textLength="110" lengthAdjust="spacingAndGlyphs">Downloads</text>
</g>
<rect x="979" y="497" width="29" height="412" fill="#f0f0f0"/>
<rect x="979" y="649" width="29" height="124" fill="#cdcdcd"/>
<path d="M988,518L993.5,512L999,518" fill="none" stroke="#555" stroke-width="2.4"/>
<path d="M988,890L993.5,896L999,890" fill="none" stroke="#555" stroke-width="2.4"/>

<!-- file list -->
<text class="h" x="1049" y="523" textLength="58" lengthAdjust="spacingAndGlyphs">Name</text>
<path d="M1307,503L1313,498L1319,503" fill="none" stroke="#999" stroke-width="1.4"/>
<rect x="1590" y="497" width="1.5" height="50" fill="#ececec"/>
<text class="h" x="1600" y="523" textLength="60" lengthAdjust="spacingAndGlyphs">Status</text>
<rect x="1757" y="497" width="1.5" height="50" fill="#ececec"/>
<text class="h" x="1770" y="523" textLength="138" lengthAdjust="spacingAndGlyphs">Date modified</text>

<use href="#fld" x="1056" y="566"/><use href="#fld" x="1056" y="605"/>
<use href="#chr" x="1055" y="643"/><use href="#chr" x="1055" y="682"/><use href="#chr" x="1055" y="721"/><use href="#chr" x="1055" y="761"/><use href="#chr" x="1055" y="801"/>
<rect x="1051" y="740" width="11" height="11" fill="#fff" stroke="#bbb"/><path d="M1054,748L1059,743M1056,743H1059V746" stroke="#2060c0" stroke-width="1.6" fill="none"/>
<text class="d" x="1088" y="579" textLength="250" lengthAdjust="spacingAndGlyphs">Custom Office Templates</text>
<text class="d" x="1088" y="619" textLength="175" lengthAdjust="spacingAndGlyphs">Sound recordings</text>
<text class="d" x="1088" y="658" textLength="86" lengthAdjust="spacingAndGlyphs">0000.pdf</text>
<text class="d" x="1088" y="697" textLength="79" lengthAdjust="spacingAndGlyphs">farsi.pdf</text>
<text class="d" x="1088" y="737" textLength="294" lengthAdjust="spacingAndGlyphs">Mohammad Reza's Notebook</text>
<text class="d" x="1088" y="776" textLength="309" lengthAdjust="spacingAndGlyphs">MyResume-mer.me]220 (1).pdf</text>
<text class="d ar" x="1088" y="816" font-size="21" textLength="387" lengthAdjust="spacingAndGlyphs">قرارداد استقرار شرکت پیشتازان صنعت&#160;&#160;بلور</text>
<text class="d" x="1478" y="816" textLength="75" lengthAdjust="spacingAndGlyphs">(1).pdf</text>
<path d="M1602,691A10,10 0 0 1 1619,693M1619,686V693H1612M1618,703A10,10 0 0 1 1602,701M1602,708V701H1609" fill="none" stroke="#1a7fd0" stroke-width="2.2"/>
<text class="g" x="1770" y="580" textLength="89" lengthAdjust="spacingAndGlyphs">3/2/2025</text>
<text class="g" x="1770" y="619" textLength="89" lengthAdjust="spacingAndGlyphs">3/2/2025</text>
<text class="g" x="1770" y="658" textLength="89" lengthAdjust="spacingAndGlyphs">5/5/2024</text>
<text class="g" x="1770" y="697" textLength="100" lengthAdjust="spacingAndGlyphs">5/14/2025</text>
<text class="g" x="1770" y="737" textLength="100" lengthAdjust="spacingAndGlyphs">6/29/2024</text>
<text class="g" x="1770" y="776" textLength="112" lengthAdjust="spacingAndGlyphs">10/30/2024</text>
<text class="g" x="1770" y="816" textLength="112" lengthAdjust="spacingAndGlyphs">12/19/2024</text>

<!-- h-scroll -->
<rect x="1018" y="879" width="844" height="30" fill="#f0f0f0"/>
<rect x="1049" y="879" width="446" height="29" fill="#cdcdcd"/>
<path d="M1036,888L1031,894L1036,900" fill="none" stroke="#555" stroke-width="2.4"/>
<path d="M1844,888L1849,894L1844,900" fill="none" stroke="#555" stroke-width="2.4"/>

<!-- bottom -->
<rect x="717" y="909" width="1145" height="351" fill="#f0f0f0"/>
<text class="d" x="841" y="949" textLength="100" lengthAdjust="spacingAndGlyphs">File name:</text>
<text class="d" x="813" y="990" textLength="128" lengthAdjust="spacingAndGlyphs">Save as type:</text>
<rect x="952" y="930" width="902" height="37" fill="#fff" stroke="#a6a6a6" stroke-width="1.6"/>
<text class="d" x="960" y="948" textLength="79" lengthAdjust="spacingAndGlyphs">farsi.pdf</text>
<path d="M1832,946L1838,952L1844,946" fill="none" stroke="#666" stroke-width="2"/>
<rect x="952" y="971" width="902" height="37" fill="url(#cb)" stroke="#1f6aa8" stroke-width="1.6"/>
<text class="d" x="955" y="990" textLength="302" lengthAdjust="spacingAndGlyphs">Adobe PDF (Interactive) (*.pdf)</text>
<path d="M1832,987L1838,993L1844,987" fill="none" stroke="#556" stroke-width="2"/>
<path d="M735,1224L742,1216L749,1224" fill="none" stroke="#444" stroke-width="3"/>
<text class="d" x="761" y="1219" textLength="124" lengthAdjust="spacingAndGlyphs">Hide Folders</text>
</g>

<!-- dropdown list -->
<rect x="956" y="1010" width="904" height="393" fill="#000" opacity=".2" filter="url(#sh)"/>
<rect x="952" y="1008" width="902" height="391" fill="#fff" stroke="#6aaed6" stroke-width="1.6"/>
<rect x="952" y="1008" width="902" height="31" fill="#0078d7"/>
<text class="d" x="954" y="1025" style="fill:#fff" textLength="302" lengthAdjust="spacingAndGlyphs">Adobe PDF (Interactive) (*.pdf)</text>
<text class="d" x="954" y="1055" textLength="243" lengthAdjust="spacingAndGlyphs">Adobe PDF (Print) (*.pdf)</text>
<text class="d" x="954" y="1085" textLength="103" lengthAdjust="spacingAndGlyphs">EPS (*.eps)</text>
<text class="d" x="954" y="1115" textLength="280" lengthAdjust="spacingAndGlyphs">EPUB (Fixed Layout) (*.epub)</text>
<text class="d" x="954" y="1145" textLength="265" lengthAdjust="spacingAndGlyphs">EPUB (Reflowable) (*.epub)</text>
<text class="d" x="954" y="1175" textLength="225" lengthAdjust="spacingAndGlyphs">HTML (Legacy) (*.html)</text>
<text class="d" x="954" y="1205" textLength="149" lengthAdjust="spacingAndGlyphs">HTML5 (*.html)</text>
<text class="d" x="954" y="1235" textLength="255" lengthAdjust="spacingAndGlyphs">InCopy Document (*.icml)</text>
<text class="d" x="954" y="1265" textLength="319" lengthAdjust="spacingAndGlyphs">InDesign Markup (IDML) (*.idml)</text>
<text class="d" x="954" y="1295" textLength="252" lengthAdjust="spacingAndGlyphs">InDesign Snippet (*.idms)</text>
<text class="d" x="954" y="1325" textLength="111" lengthAdjust="spacingAndGlyphs">JPEG (*.jpg)</text>
<text class="d" x="954" y="1355" textLength="116" lengthAdjust="spacingAndGlyphs">PNG (*.png)</text>
<text class="d" x="954" y="1385" textLength="112" lengthAdjust="spacingAndGlyphs">XML (*.xml)</text>
</svg>
</body></html>
